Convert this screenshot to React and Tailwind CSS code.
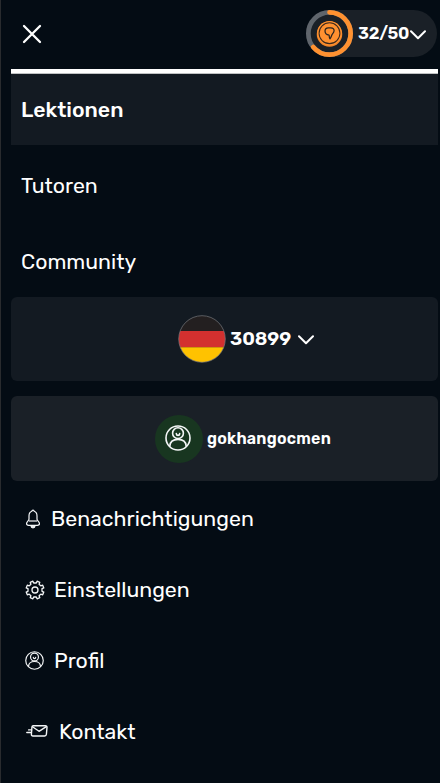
const Chevron = ({ className }) => (
  <svg className={className} viewBox="0 0 16 10" fill="none" stroke="#fff" strokeWidth="2" strokeLinecap="round" strokeLinejoin="round">
    <path d="M1 1.3 8 8.3 15 1.3" />
  </svg>
);

const CloseIcon = () => (
  <svg className="h-5 w-5" viewBox="0 0 20 20" fill="none" stroke="#fff" strokeWidth="2.3" strokeLinecap="round">
    <path d="M2 2 18 18M18 2 2 18" />
  </svg>
);

const UserIcon = ({ className, strokeWidth = 1.6 }) => (
  <svg className={className} viewBox="0 0 26 26" fill="none" stroke="#f4f6f7" strokeWidth={strokeWidth} strokeLinecap="round">
    <circle cx="13" cy="13" r="12" />
    <circle cx="13" cy="8.2" r="5.4" />
    <path d="M4.8 21.2C5 16.8 8.2 14.4 13 14.4s8 2.4 8.2 6.8" />
    <path d="M11.3 8.6c.2 2.4 3.2 2.4 3.4 0" />
  </svg>
);

const BellIcon = () => (
  <svg className="h-5 w-[14px] shrink-0" viewBox="0 0 14 20" fill="none" stroke="#f4f6f7" strokeWidth="1.2" strokeLinejoin="round">
    <path d="M5.9 2.3c0-1.5 2.2-1.5 2.2 0C10.3 3 11 4.9 11 7v3.2c0 1.4 2.5 2.5 2.5 4.4 0 1.2-.8 1.7-2 1.7h-9c-1.2 0-2-.5-2-1.7 0-1.9 2.5-3 2.5-4.4V7c0-2.1.7-4 2.9-4.7Z" />
    <path d="M3 12h8" />
    <path d="M5 17h4c-.2 2.4-3.8 2.4-4 0Z" fill="#d5d9dc" />
  </svg>
);

const GearIcon = () => (
  <svg className="h-5 w-5 shrink-0" viewBox="0 0 20 20" fill="none" stroke="#f4f6f7" strokeWidth="1.3" strokeLinejoin="round">
    <circle cx="10" cy="10" r="3" />
    <path d="M7.9 1.2 8.7 3h2.6l.8-1.8 2.7 1.1-.7 1.9 1.7 1.7 1.9-.7 1.1 2.7-1.8.8v2.6l1.8.8-1.1 2.7-1.9-.7-1.7 1.7.7 1.9-2.7 1.1-.8-1.8H8.7l-.8 1.8-2.7-1.1.7-1.9-1.7-1.7-1.9.7-1.1-2.7 1.8-.8V8.7l-1.8-.8 1.1-2.7 1.9.7 1.7-1.7-.7-1.9Z" />
  </svg>
);

const MailIcon = () => (
  <svg className="mb-[2px] h-3 w-[22px] shrink-0" viewBox="0 0 22 12" fill="none" stroke="#f4f6f7" strokeWidth="1.4" strokeLinecap="round" strokeLinejoin="round">
    <path d="M7.2.8h12.2c1.1 0 1.7.7 1.6 1.7l-.6 6.8c-.1 1-.8 1.7-1.8 1.7H7c-1.1 0-1.7-.7-1.6-1.7L5.9 2.3C6 1.4 6.5.8 7.2.8Z" />
    <path d="M6.5 1.7 13 6.3l7.300-4.600" />
    <path d="M2.600 4.900h3M.8 7.500h4.500" />
  </svg>
);

const ProgressCoin = () => (
  <svg className="h-[47px] w-[47px] shrink-0" viewBox="0 0 46 46" fill="none">
    <circle cx="23" cy="23" r="20.700" stroke="#5f656c" strokeWidth="4.600" />
    <circle cx="23" cy="23" r="20.700" stroke="#ff9130" strokeWidth="4.600" strokeLinecap="round" pathLength="100" strokeDasharray="64 36" transform="rotate(-90 23 23)" />
    <circle cx="23" cy="23.500" r="12.500" fill="#f28427" />
    <circle cx="23" cy="22.700" r="12" fill="#ff9130" />
    <circle cx="23" cy="22.700" r="10.200" stroke="#3b291d" strokeWidth="1" />
    <path d="M18.600 20.600c0-1.900 1.400-3.100 3.300-3.100h2.400c1.900 0 3.200 1.200 3.200 2.900 0 1.300-.8 2.200-1.700 3.200-.9 1.100-1 3.300-2.300 4.600-.8-1-.8-2.400-.9-3.700-2.300-.2-4-1.700-4-3.900Z" stroke="#29231f" strokeWidth="1.200" strokeLinejoin="round" />
  </svg>
);

const GermanFlag = () => (
  <svg className="h-12 w-12 shrink-0" viewBox="0 0 48 48">
    <defs><clipPath id="flag-circle"><circle cx="24" cy="24" r="23.300" /></clipPath></defs>
    <g clipPath="url(#flag-circle)">
      <path d="M0 0h48v16H0z" fill="#231f20" />
      <path d="M0 16h48v16.300H0z" fill="#d3302f" />
      <path d="M0 32.300h48V48H0z" fill="#ffc200" />
    </g>
    <circle cx="24" cy="24" r="23.300" fill="none" stroke="#77797c" strokeWidth=".7" />
  </svg>
);

export default function App() {
  return (
    <div className="h-[783px] w-[440px] overflow-hidden border-l border-[#292b2e] bg-[#040c14] pr-[2px] pl-[10px] font-['Rubik','Roboto',sans-serif] text-white">
      <header className="flex h-[69px] items-start justify-between">
        <button aria-label="Menü schließen" className="mt-6 ml-[11px]"><CloseIcon /></button>
        <button className="mt-[10px] mr-px ml-auto flex h-[47px] w-[131px] items-center rounded-full bg-[#1a2027]">
          <ProgressCoin />
          <span className="ml-[5px] w-[50px] whitespace-nowrap text-left text-[17px] font-semibold tracking-[-0.3px]">32/50</span>
          <Chevron className="ml-[2px] mt-[2px] h-[10px] w-4" />
        </button>
      </header>
      <div className="h-[5px] border-b border-[#bfc1c3] bg-white" />
      <nav className="flex flex-col gap-[5px] text-[21.3px]">
        <a className="flex h-[71px] items-center bg-[#131a22] pl-[10px] font-medium">Lektionen</a>
        <a className="flex h-[71px] items-center pl-[10px]">Tutoren</a>
        <a className="flex h-[71px] items-center pl-[10px]">Community</a>
      </nav>
      <button className="flex h-[84px] w-full items-center rounded-md bg-[#131a22] pl-[167px]">
        <GermanFlag />
        <span className="ml-1 w-[62px] text-left text-[19px] font-semibold tracking-[-0.1px]">30899</span>
        <Chevron className="ml-[6px] mt-[2px] h-[10px] w-4" />
      </button>
      <button className="mt-[15px] flex h-[85px] w-full items-center rounded-md bg-[#1a2027] pl-[144px]">
        <span className="flex h-12 w-12 shrink-0 items-center justify-center rounded-full bg-[#183620] pr-[2px] pb-[2px]"><UserIcon className="h-[26px] w-[26px]" /></span>
        <span className="ml-1 text-[16px] font-semibold tracking-[0.23px]">gokhangocmen</span>
      </button>
      <nav className="mt-[2px] text-[21.3px]">
        <a className="flex h-[71px] items-center pl-[15px]"><BellIcon /><span className="ml-[11px]">Benachrichtigungen</span></a>
        <a className="flex h-[71px] items-center pl-[14px]"><GearIcon /><span className="ml-[9px]">Einstellungen</span></a>
        <a className="flex h-[71px] items-center pl-[14px]"><UserIcon className="h-[19px] w-[19px] shrink-0" /><span className="ml-[10px]">Profil</span></a>
        <a className="flex h-[72px] items-center pl-[15px]"><MailIcon /><span className="ml-[11px]">Kontakt</span></a>
      </nav>
    </div>
  );
}
